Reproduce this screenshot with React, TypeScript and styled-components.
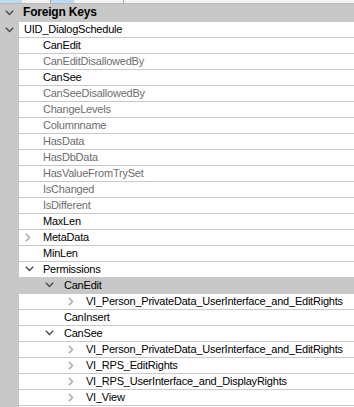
import React from "react";
import styled, { createGlobalStyle } from "styled-components";

const Global = createGlobalStyle`
  html, body { margin: 0; padding: 0; background: #ffffff; }
  body { font-family: "Liberation Sans", Arial, sans-serif; overflow: hidden; }
`;

const Frame = styled.div`
  width: 354px;
  height: 407px;
  overflow: hidden;
  display: flex;
  flex-direction: column;
  background: #ffffff;
`;

const TabStrip = styled.div`
  height: 3px;
  flex: none;
  display: flex;
  background: #f4f4f6;
  border-bottom: 1px solid #b9b9b9;
`;

const TabSeg = styled.div<{ $w: number; $active?: boolean; $sep?: boolean }>`
  width: ${(p) => p.$w}px;
  flex: none;
  background: ${(p) => (p.$active ? "#bcdcf4" : "transparent")};
  border-right: ${(p) => (p.$sep ? "1px solid #a8a8a8" : "none")};
`;

const Row = styled.div<{ $h?: number }>`
  display: flex;
  height: ${(p) => p.$h ?? 16}px;
  flex: none;
`;

const Gutter = styled.div`
  width: 19px;
  flex: none;
  background: #c8c8c8;
  display: flex;
  align-items: center;
  justify-content: center;
  padding-bottom: 1px;
  box-sizing: border-box;
`;

const Cell = styled.div<{ $pad: number; $kind: "header" | "category" | "item" }>`
  flex: 1;
  min-width: 0;
  position: relative;
  box-sizing: border-box;
  display: flex;
  align-items: center;
  padding-left: ${(p) => p.$pad}px;
  background: ${(p) => (p.$kind === "item" ? "#ffffff" : "#c8c8c8")};
  border-bottom: 1px solid ${(p) => (p.$kind === "item" ? "#c9c9c9" : "#c8c8c8")};
  white-space: nowrap;
`;

const Label = styled.span<{ $muted?: boolean; $bold?: boolean }>`
  font-size: ${(p) => (p.$bold ? 12 : 11)}px;
  letter-spacing: ${(p) => (p.$bold ? -0.2 : -0.22)}px;
  line-height: 15px;
  color: ${(p) => (p.$muted ? "#6d6d6d" : "#000000")};
  font-weight: ${(p) => (p.$bold ? 700 : 400)};
`;

const Expander = styled.span<{ $left: number }>`
  position: absolute;
  left: ${(p) => p.$left}px;
  top: 0;
  bottom: 1px;
  display: flex;
  align-items: center;
`;

const Chevron = ({ open }: { open: boolean }) =>
  open ? (
    <svg width="9" height="6" viewBox="0 0 9 6">
      <polyline points="0.8,0.8 4.5,4.5 8.2,0.8" fill="none" stroke="#4a4a4a" strokeWidth="1.4" />
    </svg>
  ) : (
    <svg width="6" height="9" viewBox="0 0 6 9">
      <polyline points="0.8,0.8 4.5,4.5 0.8,8.2" fill="none" stroke="#a6a6a6" strokeWidth="1.4" />
    </svg>
  );

type Item = {
  text: string;
  level: number;
  muted?: boolean;
  exp?: "open" | "closed";
  kind?: "category" | "item";
};

const items: Item[] = [
  { text: "UID_DialogSchedule", level: 0, exp: "open" },
  { text: "CanEdit", level: 1 },
  { text: "CanEditDisallowedBy", level: 1, muted: true },
  { text: "CanSee", level: 1 },
  { text: "CanSeeDisallowedBy", level: 1, muted: true },
  { text: "ChangeLevels", level: 1, muted: true },
  { text: "Columnname", level: 1, muted: true },
  { text: "HasData", level: 1, muted: true },
  { text: "HasDbData", level: 1, muted: true },
  { text: "HasValueFromTrySet", level: 1, muted: true },
  { text: "IsChanged", level: 1, muted: true },
  { text: "IsDifferent", level: 1, muted: true },
  { text: "MaxLen", level: 1 },
  { text: "MetaData", level: 1, exp: "closed" },
  { text: "MinLen", level: 1 },
  { text: "Permissions", level: 1, exp: "open" },
  { text: "CanEdit", level: 2, exp: "open", kind: "category" },
  { text: "VI_Person_PrivateData_UserInterface_and_EditRights", level: 3, exp: "closed" },
  { text: "CanInsert", level: 2 },
  { text: "CanSee", level: 2, exp: "open" },
  { text: "VI_Person_PrivateData_UserInterface_and_EditRights", level: 3, exp: "closed" },
  { text: "VI_RPS_EditRights", level: 3, exp: "closed" },
  { text: "VI_RPS_UserInterface_and_DisplayRights", level: 3, exp: "closed" },
  { text: "VI_View", level: 3, exp: "closed" },
  { text: "", level: 3 },
];

const textPad = [5, 24, 45, 67];
const chevPad = [0, 6, 26, 49];

export default function App() {
  return (
    <>
      <Global />
      <Frame>
        <TabStrip>
          <TabSeg $w={22} $active />
          <TabSeg $w={28} $sep />
          <TabSeg $w={23} $active />
          <TabSeg $w={49} $sep />
        </TabStrip>
        <Row $h={18}>
          <Gutter>
            <Chevron open />
          </Gutter>
          <Cell $pad={4} $kind="header">
            <Label $bold>Foreign Keys</Label>
          </Cell>
        </Row>
        {items.map((it, i) => (
          <Row key={i}>
            <Gutter>{it.level === 0 && it.exp ? <Chevron open={it.exp === "open"} /> : null}</Gutter>
            <Cell $pad={textPad[it.level]} $kind={it.kind ?? "item"}>
              {it.level > 0 && it.exp ? (
                <Expander $left={chevPad[it.level]}>
                  <Chevron open={it.exp === "open"} />
                </Expander>
              ) : null}
              <Label $muted={it.muted}>{it.text}</Label>
            </Cell>
          </Row>
        ))}
      </Frame>
    </>
  );
}
